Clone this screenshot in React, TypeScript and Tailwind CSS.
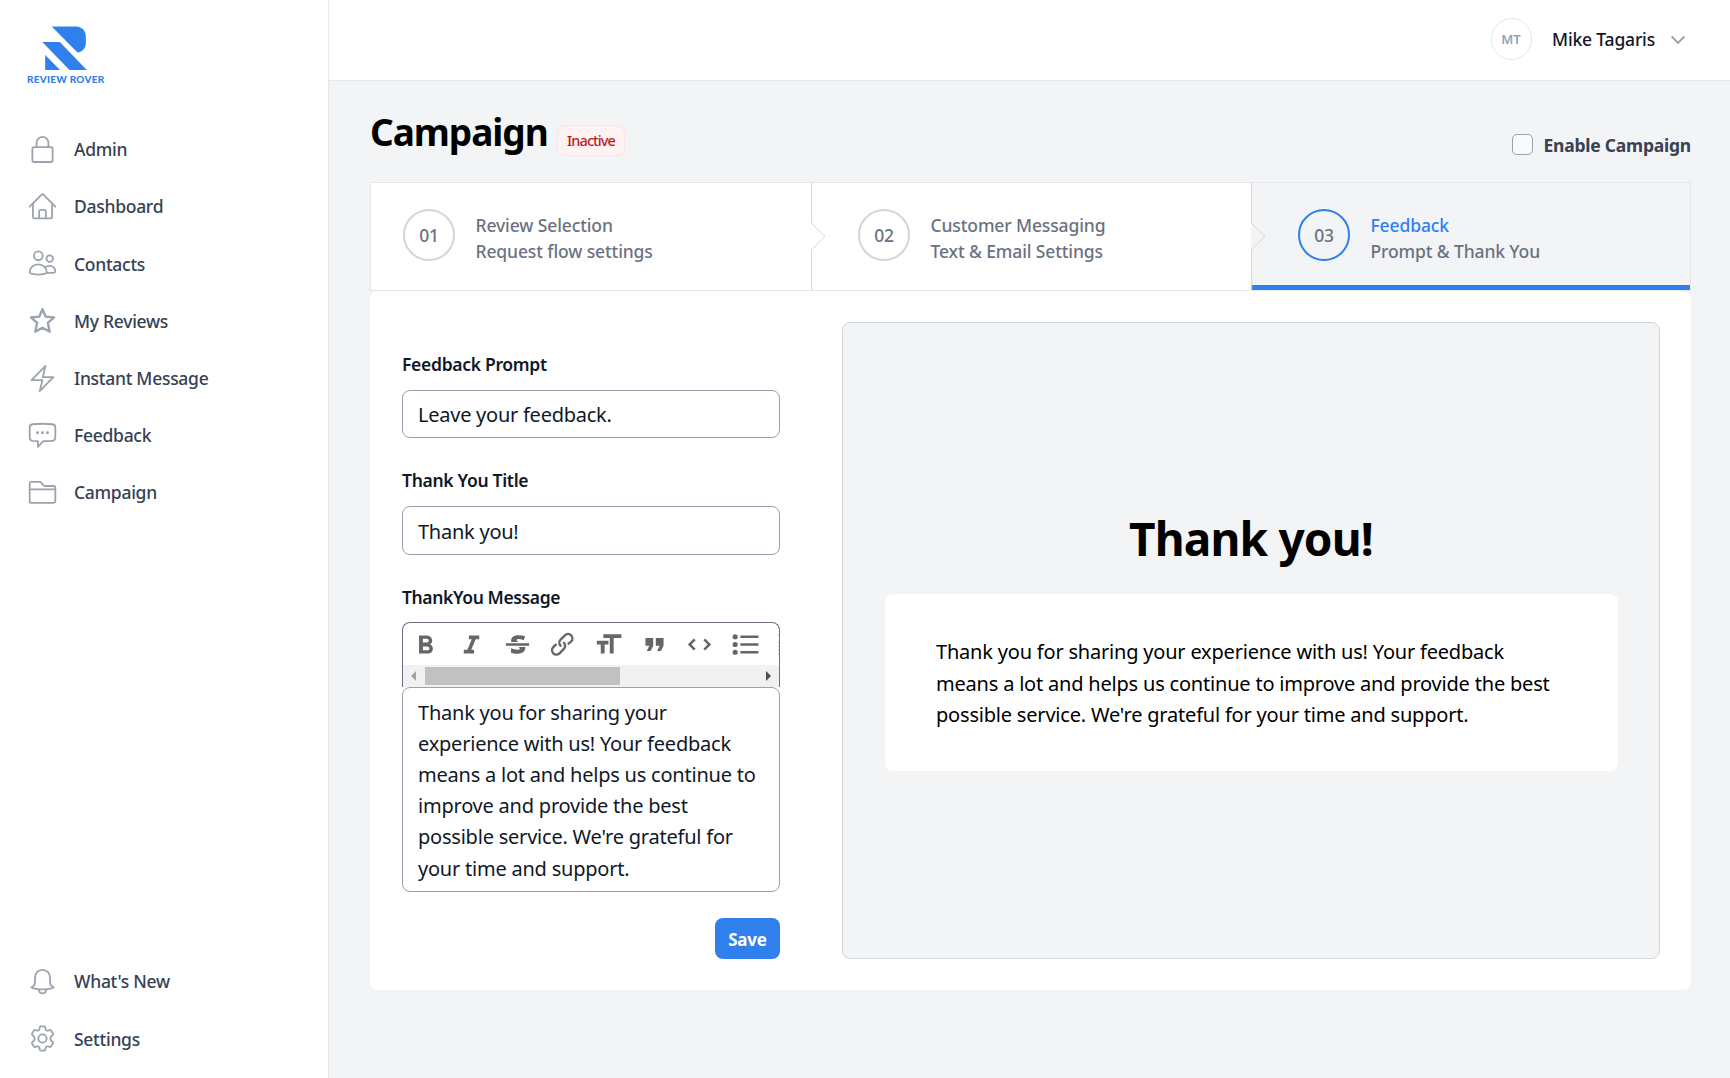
import { useState } from "react";
import type { ReactNode } from "react";

const BLUE = "#2f80ed";

const Icon = ({ children, strokeWidth = 1.6 }: { children: ReactNode; strokeWidth?: number }) => (
  <svg
    viewBox="0 0 24 24"
    className="w-[27px] h-[27px] shrink-0 overflow-visible text-[#9ca3af]"
    fill="none"
    stroke="currentColor"
    strokeWidth={strokeWidth}
    strokeLinecap="round"
    strokeLinejoin="round"
  >
    {children}
  </svg>
);

const mainNav = [
  {
    name: "Admin",
    icon: (
      <Icon>
        <rect x="3" y="9.9" width="18" height="13.2" rx="1.5" />
        <path d="M6.75 9.9V6a5.25 5.25 0 0 1 10.5 0v3.9" />
      </Icon>
    ),
  },
  {
    name: "Dashboard",
    icon: (
      <Icon>
        <path d="M.6 12.2 10.94 1.7a1.5 1.5 0 0 1 2.12 0L23.4 12.2" />
        <path d="M3.5 9.5v11.9a1.2 1.2 0 0 0 1.2 1.2h14.6a1.2 1.2 0 0 0 1.2-1.2V9.5" />
        <path d="M9 22.5v-6a1.5 1.5 0 0 1 1.5-1.5h3a1.5 1.5 0 0 1 1.5 1.5v6" />
      </Icon>
    ),
  },
  {
    name: "Contacts",
    icon: (
      <Icon>
        <circle cx="8.3" cy="5.2" r="3.9" />
        <circle cx="18.4" cy="7.7" r="2.9" />
        <path d="M.6 20c0-4.2 3.4-7.3 7.6-7.3s7.6 3.1 7.6 7.3c0 .8-3.4 1.9-7.6 1.9S.6 20.800.6 20z" />
        <path d="M14.2 15.300c1-.8 2.500-1.200 4.100-1.200 2.800 0 5.100 2 5.100 5 0 .8-1.500 1.300-3.600 1.300h-4" />
      </Icon>
    ),
  },
  {
    name: "My Reviews",
    icon: (
      <Icon strokeWidth={2.1}>
        <path d="M12 1.9 14.9 8.6 22.3 9.3 16.7 14.1 18.4 21.9 12 18.5 5.6 21.9 7.3 14.1 1.7 9.3 9.1 8.6z" />
      </Icon>
    ),
  },
  {
    name: "Instant Message",
    icon: (
      <Icon>
        <path d="M14.6.8 2.300 13.500h9.600L9.500 23.300 21.700 10.800h-9.400z" />
      </Icon>
    ),
  },
  {
    name: "Feedback",
    icon: (
      <Icon>
        <path d="M3.100 2c5.900-.6 11.900-.6 17.800 0 1.500.2 2.500 1.200 2.500 2.600v9.500c0 1.400-1 2.400-2.500 2.600-2.600.3-5.200.4-8.200.4L7.900 22.100V17l-4.800-.3C1.600 16.500.6 15.500.6 14.100V4.600C.6 3.200 1.600 2.200 3.100 2z" />
        <g fill="currentColor" stroke="none">
          <circle cx="7.600" cy="9.500" r="1.300" />
          <circle cx="12" cy="9.500" r="1.300" />
          <circle cx="16.400" cy="9.500" r="1.300" />
        </g>
      </Icon>
    ),
  },
  {
    name: "Campaign",
    icon: (
      <Icon>
        <path d="M23.400 19.800a1.500 1.500 0 0 1-1.500 1.500H2.100a1.500 1.500 0 0 1-1.500-1.500V4.100a1.500 1.500 0 0 1 1.500-1.500h7.600a1.500 1.500 0 0 1 1.200.6l1.900 2.400a1.500 1.500 0 0 0 1.200.6h7.900a1.500 1.500 0 0 1 1.500 1.500z" />
        <path d="M.6 9.200h22.800" />
      </Icon>
    ),
  },
];

const bottomNav = [
  {
    name: "What's New",
    icon: (
      <Icon>
        <path d="M12 1.600c-4 0-6.700 3.100-6.700 7v4.200c0 1.700-.9 3.200-3.200 4.500 2.500 1.300 6 1.700 9.900 1.700s7.400-.4 9.900-1.700c-2.300-1.300-3.200-2.800-3.200-4.500V8.600c0-3.900-2.700-7-6.700-7z" />
        <path d="M8.700 19.200c.2 2 1.600 3.300 3.300 3.300s3.100-1.300 3.300-3.300" />
      </Icon>
    ),
  },
  {
    name: "Settings",
    icon: (
      <Icon>
        <circle cx="12" cy="12" r="3.700" />
        <path d="M10.500 1.300h3a1 1 0 0 1 1 .8l.4 1.900a1.500 1.500 0 0 0 1.900 1l1.700-.5a1 1 0 0 1 1.200.5l1.600 2.600a1 1 0 0 1-.2 1.200l-1.300 1.200a2.800 2.800 0 0 0 0 4l1.300 1.200a1 1 0 0 1 .2 1.200L19.700 19a1 1 0 0 1-1.200.5l-1.700-.5a1.500 1.500 0 0 0-1.900 1l-.4 1.900a1 1 0 0 1-1 .8h-3a1 1 0 0 1-1-.8L9.100 20a1.500 1.500 0 0 0-1.900-1l-1.700.5a1 1 0 0 1-1.200-.5l-1.600-2.600a1 1 0 0 1 .2-1.200L4.200 14a2.800 2.800 0 0 0 0-4L2.900 8.800a1 1 0 0 1-.2-1.200L4.300 5a1 1 0 0 1 1.200-.5l1.700.5a1.500 1.500 0 0 0 1.900-1l.4-1.900a1 1 0 0 1 1-.8z" />
      </Icon>
    ),
  },
];

const steps = [
  { id: "01", title: "Review Selection", subtitle: "Request flow settings" },
  { id: "02", title: "Customer Messaging", subtitle: "Text & Email Settings" },
  { id: "03", title: "Feedback", subtitle: "Prompt & Thank You", current: true },
];

// Editor toolbar icons
const toolbar = [
  {
    name: "Bold",
    d: "M15.6 11.8c1-.7 1.6-1.8 1.6-2.8a4 4 0 0 0-4-4H7v14h7c2.1 0 3.7-1.7 3.7-3.8 0-1.5-.8-2.8-2.1-3.4zM10 7.5h3a1.5 1.5 0 1 1 0 3h-3v-3zm3.5 9H10v-3h3.5a1.5 1.5 0 1 1 0 3z",
  },
  { name: "Italic", d: "M10 5v3h2.2l-3.4 8H6v3h8v-3h-2.2l3.4-8H18V5h-8z" },
  {
    name: "Strikethrough",
    d: "M12.73 14l.28.14c.26.15.45.3.57.44.12.14.18.3.18.5 0 .3-.15.56-.44.75-.3.2-.76.3-1.39.3A13.52 13.52 0 0 1 7 14.95v3.37a10.64 10.64 0 0 0 4.84.88c1.26 0 2.35-.19 3.28-.56.93-.37 1.64-.9 2.14-1.57s.74-1.45.74-2.32c0-.26-.02-.51-.06-.75h-5.21zm-5.5-4c-.08-.34-.12-.7-.12-1.1 0-1.29.52-2.3 1.58-3.02 1.05-.72 2.5-1.08 4.34-1.08 1.62 0 3.28.34 4.97 1l-1.3 2.93c-1.47-.6-2.73-.9-3.8-.9-.55 0-.96.08-1.2.26-.26.17-.38.38-.38.64 0 .27.16.52.48.74.17.12.53.3 1.05.53H7.23zM3 13h18v-2H3v2z",
  },
  {
    name: "Link",
    d: "M9.88 13.7a4.3 4.3 0 0 1 0-6.07l3.37-3.37a4.26 4.26 0 0 1 6.07 0 4.3 4.3 0 0 1 0 6.06l-1.96 1.72a.91.91 0 1 1-1.3-1.3l1.97-1.71a2.46 2.46 0 0 0-3.48-3.48l-3.38 3.37a2.46 2.46 0 0 0 0 3.48.91.91 0 1 1-1.3 1.3zM4.25 19.46a4.3 4.3 0 0 1 0-6.07l1.93-1.9a.91.91 0 1 1 1.3 1.3l-1.93 1.9a2.46 2.46 0 0 0 3.48 3.48l3.37-3.38c.96-.96.96-2.52 0-3.48a.91.91 0 1 1 1.3-1.3 4.3 4.3 0 0 1 0 6.07l-3.38 3.38a4.26 4.26 0 0 1-6.07 0z",
  },
  { name: "Heading", d: "M12 9v3H9v7H6v-7H3V9h9zM8 4h14v3h-6v12h-3V7H8V4z" },
  { name: "Quote", d: "M6 17h3l2-4V7H5v6h3zm8 0h3l2-4V7h-6v6h3z" },
  {
    name: "Code",
    d: "M18.2 12L15 15.2l1.4 1.4L21 12l-4.6-4.6L15 8.8l3.2 3.2zM5.8 12L9 8.8 7.6 7.4 3 12l4.6 4.6L9 15.2 5.8 12z",
  },
  {
    name: "Bullets",
    d: "M4 4a2 2 0 1 0 0 4 2 2 0 0 0 0-4zm0 6a2 2 0 1 0 0 4 2 2 0 0 0 0-4zm0 6a2 2 0 1 0 0 4 2 2 0 0 0 0-4zm4 3h14v-2H8v2zm0-6h14v-2H8v2zm0-8v2h14V5H8z",
  },
  {
    name: "Numbers",
    d: "M2 17h2v.5H3v1h1v.5H2v1h3v-4H2v1zm1-9h1V4H2v1h1v3zm-1 3h1.8L2 13.1v.9h3v-1H3.2L5 10.9V10H2v1zm5-6v2h14V5H7zm0 14h14v-2H7v2zm0-6h14v-2H7v2z",
  },
];

const NavItem = ({ name, icon }: { name: string; icon: ReactNode }) => (
  <a
    href="#"
    className="flex items-center h-[57.2px] pl-[29px] gap-[18px] text-[17.5px] font-[550] tracking-[-0.28px] text-gray-700"
  >
    {icon}
    {name}
  </a>
);

const App = () => {
  const [enabled, setEnabled] = useState(false);
  const [prompt, setPrompt] = useState("Leave your feedback.");
  const [title, setTitle] = useState("Thank you!");
  const [message, setMessage] = useState(
    "Thank you for sharing your experience with us! Your feedback means a lot and helps us continue to improve and provide the best possible service. We're grateful for your time and support."
  );

  return (
    <div className="flex h-screen overflow-hidden bg-gray-100 font-['Noto_Sans',sans-serif]">
      {/* Sidebar */}
      <aside className="flex flex-col w-[329px] shrink-0 bg-white border-r border-gray-200">
        <div className="pt-[26px] pl-7 h-[120.7px]">
          <svg viewBox="28 26 77 44" className="w-[77px] h-11" fill={BLUE}>
            <path d="M51.7 26.5H76c5.5 0 9.8 4.3 9.8 9.8v7c0 4.9-3.5 8.7-8.3 9.3z" />
            <path d="M42.3 42h17.5l27 27.9H69.5z" />
            <path d="M45.2 55v14.9h14.9z" />
          </svg>
          <div className="-ml-px mt-[3px] text-[10px] leading-3 font-black tracking-[0.25px] text-[#2f80ed] font-['Lato',sans-serif] whitespace-nowrap">
            REVIEW ROVER
          </div>
        </div>
        <nav className="flex-1">
          {mainNav.map((item) => (
            <NavItem key={item.name} {...item} />
          ))}
        </nav>
        <nav className="flex flex-col gap-[0.7px] pb-[10.5px]">
          {bottomNav.map((item) => (
            <NavItem key={item.name} {...item} />
          ))}
        </nav>
      </aside>

      <div className="flex-1 min-w-0">
        {/* Header */}
        <header className="flex items-center justify-end h-[81px] pr-11 pb-0.5 bg-white border-b border-gray-200">
          <div className="flex items-center justify-center w-[41px] h-[42px] pt-0.5 rounded-full border border-gray-200 text-[13px] font-semibold text-gray-400">
            MT
          </div>
          <span className="ml-[20.5px] pt-px text-[17.5px] font-[550] tracking-[-0.18px] text-gray-900">
            Mike Tagaris
          </span>
          <svg viewBox="0 0 16 10" className="w-4 h-2.5 ml-[15px] mt-0.5 text-gray-400" fill="none" stroke="currentColor" strokeWidth="1.9">
            <path d="M1.7 1.5 8 7.8l6.3-6.3" />
          </svg>
        </header>

        <main className="pl-[41px] pr-[39px]">
          {/* Title */}
          <div className="flex items-start h-[101px]">
            <h1 className="mt-[25px] w-[187px] text-[37px] leading-[52px] font-bold tracking-[-1.05px] text-black whitespace-nowrap">
              Campaign
            </h1>
            <span className="flex items-center justify-center mt-11 w-[68px] h-[31px] rounded-lg border border-red-100 bg-red-50 text-[14.5px] font-medium tracking-[-0.9px] text-[#b91c1c]">
              Inactive
            </span>
            <label className="flex items-center ml-auto mt-[51px] text-[17.5px] leading-[26px] font-bold tracking-[-0.23px] text-gray-700">
              <input
                type="checkbox"
                checked={enabled}
                onChange={(e) => setEnabled(e.target.checked)}
                className="appearance-none w-[21px] h-[21px] mr-[11px] mb-0.5 rounded-[5px] border border-gray-400 bg-gray-50 checked:bg-[#2f80ed]"
              />
              Enable Campaign
            </label>
          </div>

          {/* Steps */}
          <ol className="grid grid-cols-[440px_440px_1fr] h-[109px] border border-gray-200 bg-white">
            {steps.map((step, i) => (
              <li
                key={step.id}
                className={`relative flex items-center pb-[3px] ${i === 0 ? "pl-8" : "pl-[47px]"} ${
                  step.current ? "bg-gray-100" : ""
                }`}
              >
                {step.current && <span className="absolute inset-x-0 bottom-0 h-[5px] bg-[#2f80ed]" />}
                {i > 0 && (
                  <svg
                    viewBox="0 0 12 82"
                    preserveAspectRatio="none"
                    className="absolute left-0 top-0 w-4 h-full text-gray-300"
                    fill="none"
                    stroke="currentColor"
                  >
                    <path d="M0.5 0V31L10.5 41L0.5 51V82" vectorEffect="non-scaling-stroke" />
                  </svg>
                )}
                <span
                  className={`flex items-center justify-center w-[52px] h-[52px] rounded-full border-2 text-[17.5px] font-medium tracking-[-0.3px] text-gray-500 ${
                    step.current ? "border-[#2f80ed]" : "border-gray-300"
                  }`}
                >
                  {step.id}
                </span>
                <span className="flex flex-col mt-[6px] ml-[20.5px] text-[17.5px] leading-[26px] font-medium tracking-[-0.12px] text-gray-500">
                  <span className={step.current ? "text-[#2f80ed]" : ""}>{step.title}</span>
                  <span>{step.subtitle}</span>
                </span>
              </li>
            ))}
          </ol>

          {/* Panel */}
          <div className="flex gap-[62px] h-[699px] py-[31px] pl-8 pr-[31px] bg-white rounded-lg">
            <div className="flex flex-col w-[378px] pt-[29px] text-gray-900">
              <label className="mb-[13px] text-[17.5px] leading-[26px] font-[560] tracking-[-0.3px]">
                Feedback Prompt
              </label>
              <input
                value={prompt}
                onChange={(e) => setPrompt(e.target.value)}
                className="h-12 pl-[15px] pr-4 text-xl tracking-[-0.25px] rounded-lg border border-gray-400"
              />
              <label className="mt-[29px] mb-[13px] text-[17.5px] leading-[26px] font-[560] tracking-[-0.3px]">
                Thank You Title
              </label>
              <input
                value={title}
                onChange={(e) => setTitle(e.target.value)}
                className="h-[49px] pt-px pl-[15px] pr-4 text-xl tracking-[-0.25px] rounded-lg border border-gray-400"
              />
              <label className="mt-[29px] mb-3 text-[17.5px] leading-[26px] font-[560] tracking-[-0.38px]">
                ThankYou Message
              </label>

              {/* Editor */}
              <div className="h-[65px] rounded-t-lg border border-b-0 border-gray-500 overflow-hidden">
                <div className="flex h-[42px] overflow-hidden">
                  {toolbar.map((tool) => (
                    <button key={tool.name} title={tool.name} className="flex items-center justify-center w-[45.7px] shrink-0">
                      <svg viewBox="0 0 24 24" className="w-[31px] h-[31px] shrink-0" fill="#666666">
                        <path d={tool.d} />
                      </svg>
                    </button>
                  ))}
                </div>
                <div className="flex items-center h-[22px] pl-2 pr-1.5 bg-[#f1f1f1]">
                  <svg viewBox="0 0 5 10" className="w-[5px] h-2.5" fill="#a3a3a3">
                    <path d="M5 0v10L0 5z" />
                  </svg>
                  <div className="w-[195px] h-[18px] ml-[9px] bg-[#c1c1c1]" />
                  <svg viewBox="0 0 5 10" className="w-[5px] h-2.5 ml-auto mr-0.5" fill="#505050">
                    <path d="M0 0v10l5-5z" />
                  </svg>
                </div>
              </div>
              <textarea
                value={message}
                onChange={(e) => setMessage(e.target.value)}
                className="h-[205px] shrink-0 pl-[15px] pr-4 py-[8.5px] text-xl leading-[31.2px] tracking-[-0.22px] rounded-lg border border-gray-400 resize-none overflow-hidden"
              />
              <button className="self-end shrink-0 mt-[26px] w-[65px] h-[41px] pt-0.5 rounded-lg bg-[#2f80ed] text-[17px] font-bold tracking-[-0.2px] text-white">
                Save
              </button>
            </div>

            {/* Preview */}
            <div className="flex flex-col justify-center flex-1 pl-[42px] pr-[41px] rounded-lg border border-gray-300 bg-gray-100 text-black">
              <h2 className="mb-7 pr-px text-center text-[46px] leading-[56px] font-bold tracking-[-0.85px]">{title}</h2>
              <div className="pl-[51px] pr-[52px] pt-[42.5px] pb-[40.5px] text-xl leading-[31.4px] tracking-[-0.2px] rounded-lg bg-white">
                {message}
              </div>
            </div>
          </div>
        </main>
      </div>
    </div>
  );
};

export default App;
